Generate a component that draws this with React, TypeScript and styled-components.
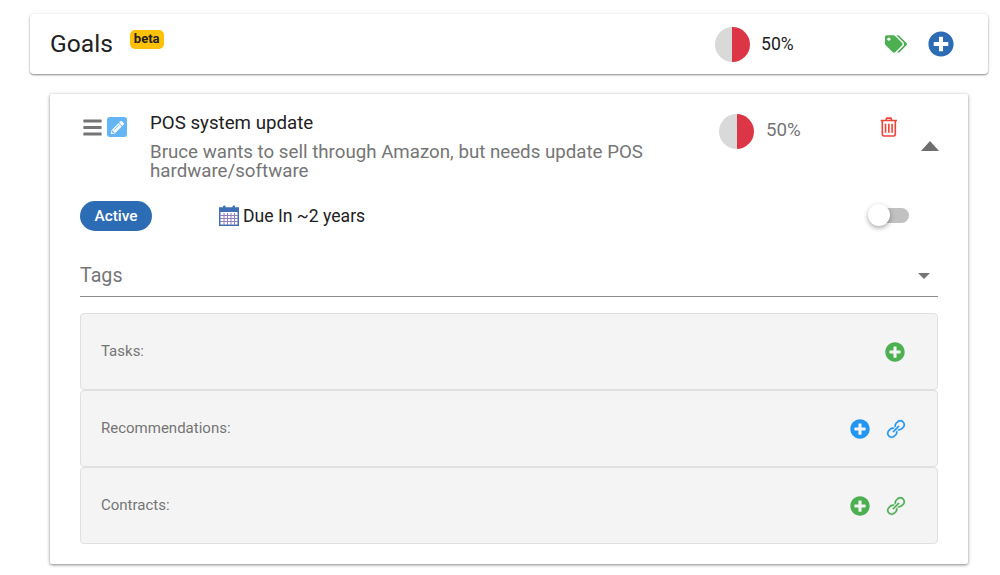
import React from 'react'
import styled, { createGlobalStyle } from 'styled-components'
import { FaBars, FaPlusCircle, FaTags, FaPencilAlt } from 'react-icons/fa'
import { LiaLinkSolid, LiaTrashAltSolid } from 'react-icons/lia'

const GlobalStyle = createGlobalStyle`
  html, body {
    margin: 0;
    padding: 0;
    background: #ffffff;
    font-family: Roboto, "Liberation Sans", sans-serif;
    color: #212121;
  }
`

const Page = styled.div`
  width: 1000px;
  height: 575px;
  overflow: hidden;
  padding: 14px 12px 0 30px;
  box-sizing: border-box;
`

const HeaderCard = styled.header`
  display: grid;
  grid-template-columns: 665px 47px 123px 43px 1fr;
  align-items: center;
  height: 60px;
  padding-left: 20px;
  box-sizing: border-box;
  background: #fff;
  border-radius: 4px;
  box-shadow: 0 1px 2px rgba(0, 0, 0, 0.45), 0 0 6px rgba(0, 0, 0, 0.06);
`

const TitleGroup = styled.div`
  display: flex;
  align-items: flex-start;
  gap: 17px;
`

const PageTitle = styled.h1`
  margin: 0;
  font-size: 24.6px;
  line-height: 30px;
  font-weight: 400;
`

const BetaBadge = styled.span`
  display: block;
  margin-top: 1px;
  padding: 0 4px;
  height: 19px;
  line-height: 17px;
  font-size: 13px;
  font-weight: 700;
  background: #ffc107;
  border-radius: 5px;
`

const Pie = styled.div`
  width: 35px;
  height: 35px;
  border-radius: 50%;
  background: linear-gradient(to right, #d9d9d9 50%, #dc3545 50%);
`

const Percent = styled.span<{ $muted?: boolean }>`
  font-size: 17.6px;
  margin-left: -1px;
  color: ${(p) => (p.$muted ? '#757575' : '#212121')};
`

const TagIcon = styled(FaTags)`
  width: 22px;
  height: 18px;
  color: #4caf50;
`

const AddIcon = styled(FaPlusCircle)<{ $size: number; $color: string }>`
  display: block;
  width: ${(p) => p.$size}px;
  height: ${(p) => p.$size}px;
  color: ${(p) => p.$color};
`

const GoalCard = styled.section`
  width: 918px;
  height: 470px;
  margin: 20px 0 0 20px;
  padding: 20px 30px 20px 30px;
  box-sizing: border-box;
  background: #fff;
  border-radius: 2px;
  box-shadow: 0 1px 3px rgba(0, 0, 0, 0.45), 0 0 6px rgba(0, 0, 0, 0.08);
`

const GoalTop = styled.div`
  display: grid;
  grid-template-columns: 70px 569px 47px 114px 58px;
  height: 87px;
`

const GoalIcons = styled.div`
  display: flex;
  gap: 4px;
  padding: 3px 0 0 2px;
  height: 20px;
`

const BarsIcon = styled(FaBars)`
  width: 21px;
  height: 21px;
  color: #757575;
`

const EditSquare = styled.span`
  display: flex;
  align-items: center;
  justify-content: center;
  width: 20px;
  height: 20px;
  background: #64b5f6;
  border-radius: 3px;
  color: #fff;
  font-size: 13px;
`

const GoalName = styled.h2`
  margin: 0 0 11px;
  font-size: 18.72px;
  line-height: 18px;
  font-weight: 400;
`

const GoalDescription = styled.p`
  margin: 0;
  font-size: 18.72px;
  line-height: 19px;
  color: #757575;
`

const GoalPie = styled(Pie)`
  margin-top: 0;
`

const GoalPercent = styled(Percent)`
  font-size: 18.72px;
  margin-left: 0;
  padding-top: 6px;
  line-height: 21px;
`

const TrashIcon = styled(LiaTrashAltSolid)`
  display: block;
  width: 26px;
  height: 26px;
  margin: 0 0 0 -5px;
  color: #f44336;
`

const CaretUp = styled.span`
  display: block;
  margin: 1px 0 0 41px;
  width: 0;
  height: 0;
  border-left: 9px solid transparent;
  border-right: 9px solid transparent;
  border-bottom: 10px solid #6e6e6e;
`

const StatusRow = styled.div`
  display: flex;
  align-items: center;
  height: 30px;
  padding-right: 29px;
`

const StatusPill = styled.span`
  display: block;
  width: 72px;
  height: 30px;
  line-height: 30px;
  text-align: center;
  border-radius: 15px;
  background: #2b6cb5;
  color: #fff;
  font-size: 15.4px;
  font-weight: 500;
`

const DueDate = styled.div`
  display: flex;
  align-items: center;
  gap: 4px;
  margin: 0 0 1px 67px;
  font-size: 17.6px;
  line-height: 28px;
  flex: 1;
`

const Switch = styled.span`
  position: relative;
  display: block;
  width: 36px;
  height: 15px;
  margin-bottom: 1px;
  border-radius: 8px;
  background: #c1c1c1;
`

const SwitchThumb = styled.span`
  position: absolute;
  left: -5px;
  top: -4px;
  width: 22px;
  height: 22px;
  border-radius: 50%;
  background: #fff;
  box-shadow: 0 2px 5px rgba(0, 0, 0, 0.35);
`

const TagsField = styled.div`
  display: flex;
  align-items: center;
  justify-content: space-between;
  height: 52px;
  margin-top: 14px;
  padding: 9px 8px 0 0;
  box-sizing: border-box;
  border-bottom: 1px solid #8c8c8c;
  font-size: 19.7px;
  color: #757575;
`

const CaretDown = styled.span`
  display: block;
  margin-top: 2px;
  width: 0;
  height: 0;
  border-left: 6.5px solid transparent;
  border-right: 6.5px solid transparent;
  border-top: 6px solid #757575;
`

const Panels = styled.div`
  display: flex;
  flex-direction: column;
  margin-top: 16px;
`

const Panel = styled.div`
  display: flex;
  align-items: center;
  justify-content: space-between;
  height: 77px;
  padding: 0 32px 1px 20px;
  box-sizing: border-box;
  background: #f4f4f4;
  border: 1px solid #e0e0e0;
  border-radius: 4px;
  font-size: 15px;
  color: #757575;
`

const PanelActions = styled.div`
  display: flex;
  align-items: center;
  gap: 14px;
  margin-top: 2px;
`

const LinkIcon = styled(LiaLinkSolid)<{ $color: string }>`
  display: block;
  width: 24px;
  height: 24px;
  margin-right: -3px;
  color: ${(p) => p.$color};
  stroke: currentColor;
  stroke-width: 0.3px;
`

const CalendarIcon = () => (
  <svg width="20" height="21" viewBox="0 0 20 21" fill="none">
    <rect x="0.75" y="3" width="18.5" height="17.25" fill="#fff" stroke="#3f6fb5" strokeWidth="1.5" />
    <rect x="1" y="3" width="18" height="4" fill="#3f6fb5" />
    <rect x="4" y="0.5" width="2.5" height="5" rx="1" fill="#3f6fb5" />
    <rect x="13.5" y="0.5" width="2.5" height="5" rx="1" fill="#3f6fb5" />
    <path
      d="M1 10.5h18M1 13.5h18M1 16.5h18M5 8v12M8.5 8v12M12 8v12M15.5 8v12"
      stroke="#8f7fc0"
      strokeWidth="1"
    />
  </svg>
)

export default function App() {
  return (
    <>
      <GlobalStyle />
      <Page>
        <HeaderCard>
          <TitleGroup>
            <PageTitle>Goals</PageTitle>
            <BetaBadge>beta</BetaBadge>
          </TitleGroup>
          <Pie />
          <Percent>50%</Percent>
          <TagIcon />
          <AddIcon $size={26} $color="#2b6cb5" />
        </HeaderCard>

        <GoalCard>
          <GoalTop>
            <GoalIcons>
              <BarsIcon />
              <EditSquare>
                <FaPencilAlt />
              </EditSquare>
            </GoalIcons>
            <div>
              <GoalName>POS system update</GoalName>
              <GoalDescription>
                Bruce wants to sell through Amazon, but needs update POS hardware/software
              </GoalDescription>
            </div>
            <GoalPie />
            <GoalPercent $muted>50%</GoalPercent>
            <div>
              <TrashIcon />
              <CaretUp />
            </div>
          </GoalTop>

          <StatusRow>
            <StatusPill>Active</StatusPill>
            <DueDate>
              <CalendarIcon />
              Due In ~2 years
            </DueDate>
            <Switch>
              <SwitchThumb />
            </Switch>
          </StatusRow>

          <TagsField>
            Tags
            <CaretDown />
          </TagsField>

          <Panels>
            <Panel>
              Tasks:
              <PanelActions>
                <AddIcon $size={20} $color="#4caf50" />
              </PanelActions>
            </Panel>
            <Panel>
              Recommendations:
              <PanelActions>
                <AddIcon $size={20} $color="#2196f3" />
                <LinkIcon $color="#2196f3" />
              </PanelActions>
            </Panel>
            <Panel>
              Contracts:
              <PanelActions>
                <AddIcon $size={20} $color="#4caf50" />
                <LinkIcon $color="#4caf50" />
              </PanelActions>
            </Panel>
          </Panels>
        </GoalCard>
      </Page>
    </>
  )
}
